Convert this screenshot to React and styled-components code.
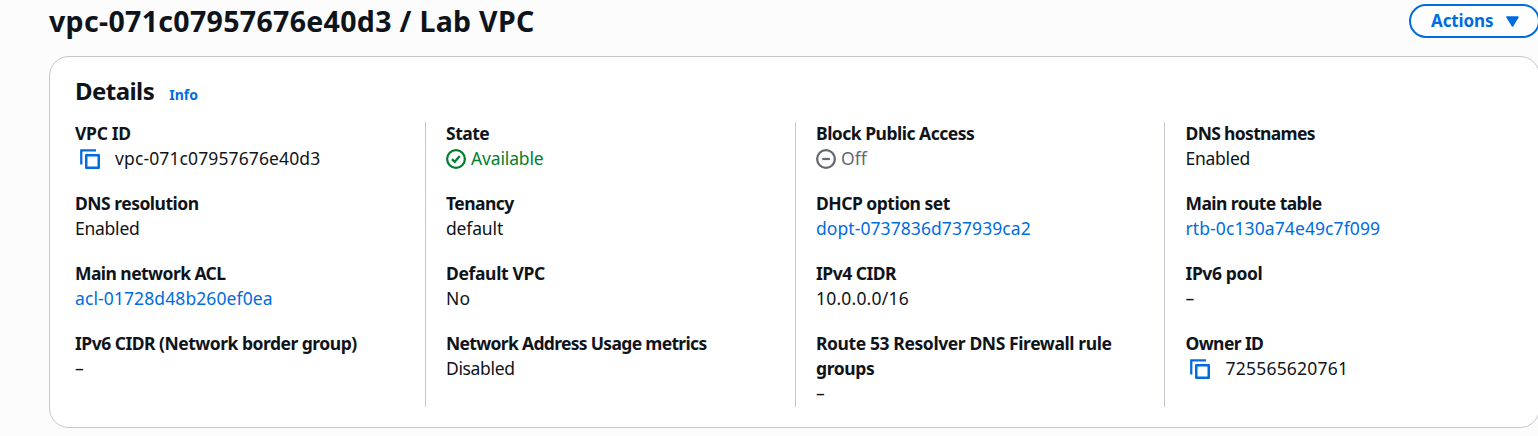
import React from "react";
import styled, { createGlobalStyle } from "styled-components";

const Global = createGlobalStyle`
  * { box-sizing: border-box; }
  body {
    margin: 0;
    height: 436px;
    overflow: hidden;
    background: #fcfcfd;
    color: #0f141a;
    font-family: "Noto Sans", "Open Sans", sans-serif;
  }
`;
const Page = styled.main`
  width: 1540px;
  padding: 4px 0 0 49px;
`;
const Header = styled.header`
  display: flex;
  justify-content: space-between;
  height: 52px;
`;
const Title = styled.h1`
  margin: -1px 0 0;
  font-size: 28.5px;
  line-height: 36px;
  font-weight: 700;
  letter-spacing: 0.32px;
  white-space: nowrap;
`;
const ActionsButton = styled.button`
  display: flex;
  align-items: center;
  gap: 12px;
  width: 131px;
  height: 34px;
  padding: 0 0 0 20px;
  border: 2px solid #006ce0;
  border-radius: 20px;
  background: #fff;
  color: #006ce0;
  font: 700 17px/24px "Noto Sans", sans-serif;
  letter-spacing: -0.1px;
`;
const Card = styled.section`
  height: 372px;
  border: 1px solid #c6c6cd;
  border-radius: 20px;
  background: #fff;
  padding: 19px 25px;
`;
const CardHead = styled.div`
  display: flex;
  align-items: baseline;
  gap: 15px;
  height: 46px;
`;
const Heading = styled.h2`
  margin: 0;
  font-size: 24px;
  line-height: 30px;
  letter-spacing: -0.55px;
`;
const Info = styled.a`
  color: #006ce0;
  font-size: 14px;
  font-weight: 700;
`;
const Columns = styled.div`
  display: grid;
  grid-template-columns: 350px 370px 369px 370px;
  height: 285px;
`;
const Column = styled.dl`
  display: flex;
  flex-direction: column;
  gap: 20px;
  margin: 0;
  padding-left: ${(p) => p.$inset}px;
  border-left: ${(p) => (p.$inset ? "1px solid #c6c6cd" : "0")};
`;
const Field = styled.div`
  margin-top: -1px;
  margin-bottom: 1px;
`;
const Label = styled.dt`
  font-size: 17.5px;
  line-height: 25px;
  font-weight: 700;
  letter-spacing: ${(p) => p.$track ?? -0.5}px;
`;
const tones = { text: "#0f141a", link: "#006ce0", success: "#00802f", muted: "#656871" };
const Value = styled.dd`
  display: flex;
  align-items: center;
  gap: ${(p) => (p.$copy ? "15.1px" : "5px")};
  height: 25px;
  margin: 0;
  padding-left: ${(p) => (p.$copy ? "4.9px" : "0")};
  font-size: 17.5px;
  line-height: 25px;
  letter-spacing: ${(p) => p.$track ?? 0.1}px;
  color: ${(p) => tones[p.$tone || "text"]};
`;
const Icon = styled.svg`
  display: block;
  flex: none;
  width: 20px;
  height: 20px;
  margin-top: 1px;
  fill: none;
  stroke: currentColor;
  stroke-width: 2;
  color: ${(p) => (p.$blue ? "#006ce0" : "inherit")};
`;
const Caret = styled.svg`
  width: 13px;
  height: 11px;
  margin-top: 1px;
  fill: currentColor;
  stroke: currentColor;
  stroke-width: 1.5;
  stroke-linejoin: round;
`;

const icons = {
  copy: (
    <Icon $blue viewBox="0 0 16 16">
      <path d="M1 12.3V1h11.8" strokeWidth="1.8" />
      <path d="M5 5h10v10H5z" strokeLinejoin="round" />
    </Icon>
  ),
  check: (
    <Icon viewBox="0 0 16 16">
      <circle cx="8" cy="8" r="7.1" strokeWidth="1.8" />
      <path d="M4.8 8.1L7 10.2l4-4.6" strokeWidth="1.8" />
    </Icon>
  ),
  minus: (
    <Icon viewBox="0 0 16 16">
      <circle cx="8" cy="8" r="7.1" strokeWidth="1.8" />
      <path d="M5 8h6.1" strokeWidth="1.8" />
    </Icon>
  ),
};

const columns = [
  [
    { label: "VPC ID", track: -0.3, value: "vpc-071c07957676e40d3", valueTrack: 0.12, icon: "copy" },
    { label: "DNS resolution", value: "Enabled", valueTrack: -0.25 },
    { label: "Main network ACL", track: -0.56, value: "acl-01728d48b260ef0ea", tone: "link" },
    { label: "IPv6 CIDR (Network border group)", value: "–" },
  ],
  [
    { label: "State", value: "Available", icon: "check", tone: "success", valueTrack: -0.15 },
    { label: "Tenancy", track: -0.55, value: "default", valueTrack: -0.15 },
    { label: "Default VPC", track: -0.35, value: "No" },
    { label: "Network Address Usage metrics", track: -0.68, value: "Disabled", valueTrack: -0.35 },
  ],
  [
    { label: "Block Public Access", value: "Off", icon: "minus", tone: "muted", valueTrack: 0 },
    { label: "DHCP option set", value: "dopt-0737836d737939ca2", tone: "link", valueTrack: 0.07 },
    { label: "IPv4 CIDR", value: "10.0.0.0/16", valueTrack: 0.2 },
    { label: "Route 53 Resolver DNS Firewall rule groups", track: -0.4, value: "–" },
  ],
  [
    { label: "DNS hostnames", track: -0.67, value: "Enabled", valueTrack: -0.25 },
    { label: "Main route table", track: -0.58, value: "rtb-0c130a74e49c7f099", tone: "link" },
    { label: "IPv6 pool", track: -0.4, value: "–" },
    { label: "Owner ID", track: -0.6, value: "725565620761", icon: "copy", valueTrack: 0.22 },
  ],
];
const insets = [0, 20, 20, 20.5];

export default function App() {
  return (
    <>
      <Global />
      <Page>
        <Header>
          <Title>vpc-071c07957676e40d3 / Lab VPC</Title>
          <ActionsButton>
            Actions
            <Caret viewBox="0 0 13 11"><path d="M1 1h11L6.5 10z" /></Caret>
          </ActionsButton>
        </Header>
        <Card>
          <CardHead>
            <Heading>Details</Heading>
            <Info>Info</Info>
          </CardHead>
          <Columns>
            {columns.map((fields, i) => (
              <Column key={i} $inset={insets[i]}>
                {fields.map((f) => (
                  <Field key={f.label}>
                    <Label $track={f.track}>{f.label}</Label>
                    <Value $tone={f.tone} $copy={f.icon === "copy"} $track={f.valueTrack}>
                      {icons[f.icon]}
                      <span>{f.value}</span>
                    </Value>
                  </Field>
                ))}
              </Column>
            ))}
          </Columns>
        </Card>
      </Page>
    </>
  );
}
